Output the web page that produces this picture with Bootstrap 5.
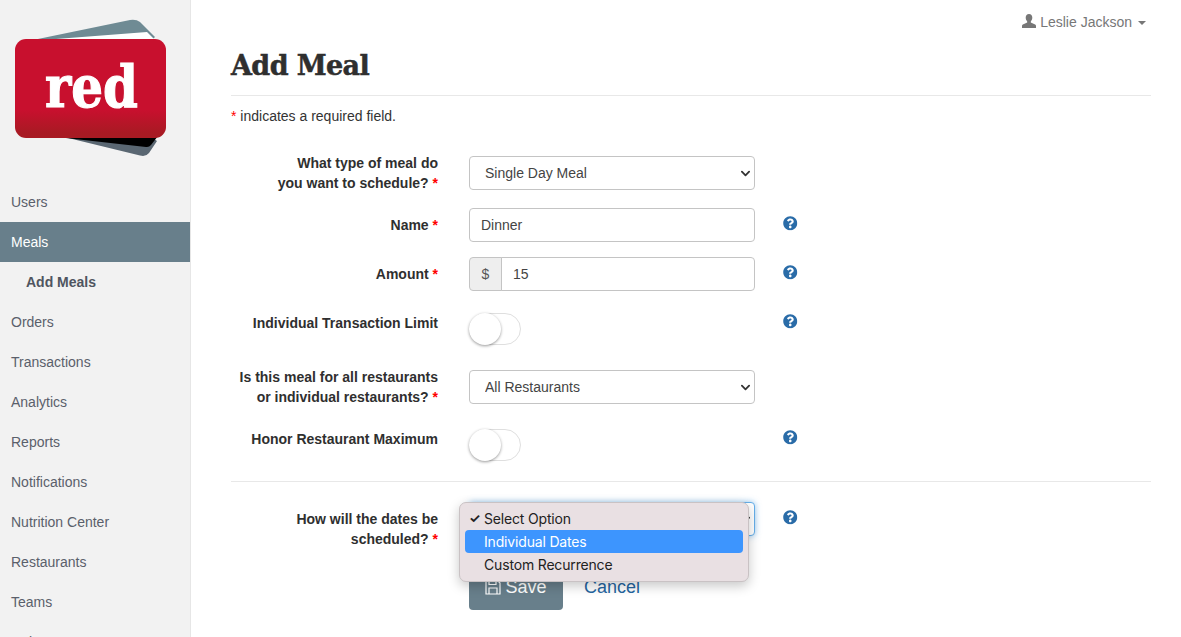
<!DOCTYPE html>
<html lang="en">
<head>
<meta charset="utf-8">
<title>Add Meal</title>
<link href="https://cdn.jsdelivr.net/npm/bootstrap@5.3.0/dist/css/bootstrap.min.css" rel="stylesheet">
<style>
html,body{height:637px;overflow:hidden}
body{font-family:"Liberation Sans",Arial,sans-serif;font-size:14px;line-height:20px;color:#333;background:#fff}
.side-pane{width:191px;flex:none;height:637px;overflow:hidden;background:#f2f2f2;border-right:1px solid #e6e6e6}
.logo-box{height:182px;padding:18px 0 0 14px}
.logo-box svg{display:block}
.side-pane .nav-link{height:40px;padding:10px 11px;color:#5a606b;font-size:14px;line-height:20px}
.side-pane .nav-link.on{background:#687f8b;color:#fff}
.side-pane .nav-link.sub{padding-left:26px;font-weight:700;color:#4f5560}
.main-pane{flex:1;min-width:0;padding:0 30px 0 40px}
.user-bar{padding:12px 5px 0 0;height:32px;color:#777}
.user-bar a{color:#777;text-decoration:none}
.user-bar svg{margin-right:4px;vertical-align:-1px}
.user-bar .dropdown-toggle::after{margin-left:6px;vertical-align:2px;border-top-width:4px;border-left-width:4px;border-right-width:4px}
.page-title{font-family:"DejaVu Serif",serif;font-weight:700;font-size:27px;line-height:40px;letter-spacing:-.6px;color:#2f2f2f;-webkit-text-stroke:.5px #2f2f2f;margin:14px 0 9px}
.rule{margin:0;border-top:1px solid #e8e8e8;opacity:1}
.req-note{margin:10px 0 27px;color:#333}
.req{color:#f00}
.form-line{display:grid;grid-template-columns:208px 286px auto;column-gap:30px;margin-bottom:15px;align-items:start}
.form-line label{text-align:right;font-weight:700;padding-top:7px;padding-right:1px;color:#2f2f2f;margin:0;line-height:20px}
.form-line label.snug{padding-top:0}
.ctrl-cell{position:relative}
.ctrl-cell.nudge{padding-top:3px}
.form-control,.form-select,.input-group-text{font-size:14px;line-height:20px;height:34px;color:#444;border-color:#c4c4c4;border-radius:4px}
.form-control{padding:6px 11px}
.form-select{padding:6px 30px 6px 15px;background-image:url("data:image/svg+xml,%3csvg xmlns='http://www.w3.org/2000/svg' viewBox='0 0 10 7'%3e%3cpath fill='none' stroke='%23333' stroke-width='2' stroke-linecap='round' stroke-linejoin='round' d='M1 1.500l4 4 4-4'/%3e%3c/svg%3e");background-position:right 4px center;background-size:9px 7px}
.input-group-text{background:#eee;padding:6px 12px;color:#555;width:33px;justify-content:center}
.form-select.picked{border-color:#66afe9;box-shadow:0 0 6px rgba(102,175,233,.7);color:transparent}
.help-mark{display:block;width:14.5px;height:14.5px;margin:8px 0 0 -2px;fill:#2a6ca8}
.switch-track{display:flex;width:52px;height:32px;margin:7px 0;border:1px solid #dfdfdf;border-radius:16px;background:#fff}
.switch-knob{width:32px;height:32px;margin:-1px 0 0 -1px;border-radius:50%;background:#fff;box-shadow:0 1px 3px rgba(0,0,0,.4)}
.rule-gap{margin:-2px 0 20px}
.save-btn{display:inline-flex;align-items:center;gap:4px;height:46px;width:94px;justify-content:center;background:#687f8b;border:0;border-radius:4px;color:#fff;font-size:18px;line-height:24px;padding:0}
.cancel-link{font-size:18px;color:#24659f;text-decoration:none;margin-left:21px}
.native-menu{position:absolute;left:-10px;top:0;width:290px;height:80px;padding:4px 5px;background:#e9e0e3;border:1px solid #c9c2c4;border-radius:7px;box-shadow:0 4px 12px rgba(0,0,0,.22);font-family:"Inter","Liberation Sans",sans-serif;font-size:14px;line-height:23px;color:#222;z-index:5}
.native-item{position:relative;height:23px;padding-left:19px;border-radius:4px;letter-spacing:-.17px}
.native-item.hl{background:#3d95fe;color:#fff}
.native-tick{position:absolute;left:4px;top:0;font-size:13px;font-weight:700}
</style>
</head>
<body>
<svg width="0" height="0" class="position-absolute" xmlns="http://www.w3.org/2000/svg"><symbol id="helpGlyph" viewBox="0 0 512 512"><path d="M504 256c0 136.997-111.043 248-248 248S8 392.997 8 256C8 119.083 119.043 8 256 8s248 111.083 248 248zM262.655 90c-54.497 0-89.255 22.957-116.549 63.758-3.536 5.286-2.353 12.415 2.715 16.258l34.699 26.31c5.205 3.947 12.621 3.008 16.665-2.122 17.864-22.658 30.113-35.797 57.303-35.797 20.429 0 45.698 13.148 45.698 32.958 0 14.976-12.363 22.667-32.534 33.976C247.128 238.528 216 254.941 216 296v4c0 6.627 5.373 12 12 12h56c6.627 0 12-5.373 12-12v-1.333c0-28.462 83.186-29.647 83.186-106.667 0-58.002-60.165-102-116.531-102zM256 338c-25.365 0-46 20.635-46 46 0 25.364 20.635 46 46 46s46-20.636 46-46c0-25.365-20.635-46-46-46z"/></symbol></svg>
<div class="d-flex">
  <aside class="side-pane">
    <div class="logo-box">
      <svg width="156" height="144" viewBox="14 18 156 144" xmlns="http://www.w3.org/2000/svg">
        <defs>
          <linearGradient id="redFace" x1="0" y1="0" x2="0" y2="1">
            <stop offset="0" stop-color="#c8102e"/>
            <stop offset=".72" stop-color="#c8102e"/>
            <stop offset=".95" stop-color="#a81a23"/>
            <stop offset="1" stop-color="#a81a23"/>
          </linearGradient>
        </defs>
        <path d="M33 40 L130 20 Q136 19 140 22 L155 37 L150 42Z" fill="#6f8b94"/>
        <path d="M43 40 L147 32 L157 42Z" fill="#fff"/>
        <path d="M60 136 L140 155.500 Q146 157 149 153 L157 141 L150 136Z" fill="#5a6772"/>
        <path d="M48 136 L146 147 Q149 147.500 151 145 L158 136Z" fill="#000"/>
        <rect x="15" y="39" width="151" height="99" rx="11" fill="url(#redFace)"/>
        <text x="45" y="107" fill="#fff" stroke="#fff" stroke-width="1.200" font-family="DejaVu Serif" font-weight="700" font-size="58" textLength="93" lengthAdjust="spacingAndGlyphs">red</text>
      </svg>
    </div>
    <nav class="nav flex-column">
      <a class="nav-link" href="#">Users</a>
      <a class="nav-link on" href="#">Meals</a>
      <a class="nav-link sub" href="#">Add Meals</a>
      <a class="nav-link" href="#">Orders</a>
      <a class="nav-link" href="#">Transactions</a>
      <a class="nav-link" href="#">Analytics</a>
      <a class="nav-link" href="#">Reports</a>
      <a class="nav-link" href="#">Notifications</a>
      <a class="nav-link" href="#">Nutrition Center</a>
      <a class="nav-link" href="#">Restaurants</a>
      <a class="nav-link" href="#">Teams</a>
      <a class="nav-link" href="#">Roles</a>
    </nav>
  </aside>
  <main class="main-pane">
    <div class="user-bar d-flex justify-content-end">
      <a class="dropdown-toggle" href="#"><svg width="14" height="14" viewBox="0 0 14 14" xmlns="http://www.w3.org/2000/svg"><path d="M7 0C4.900 0 3.700 1.500 3.700 3.600c0 1.600.6 3 1.500 3.800v1.200L.9 10.600C.3 10.900 0 11.400 0 12v2h14v-2c0-.6-.3-1.100-.9-1.400L8.800 8.600V7.400c.9-.8 1.500-2.200 1.500-3.800C10.300 1.500 9.100 0 7 0z" fill="#777"/></svg>Leslie Jackson</a>
    </div>
    <h1 class="page-title">Add Meal</h1>
    <hr class="rule">
    <p class="req-note"><span class="req">*</span> indicates a required field.</p>
    <form>
      <div class="form-line">
        <label class="snug">What type of meal do<br>you want to schedule? <span class="req">*</span></label>
        <div class="ctrl-cell nudge"><select class="form-select"><option>Single Day Meal</option></select></div>
      </div>
      <div class="form-line">
        <label>Name <span class="req">*</span></label>
        <div class="ctrl-cell"><input class="form-control" value="Dinner"></div>
        <svg class="help-mark"><use href="#helpGlyph"/></svg>
      </div>
      <div class="form-line">
        <label>Amount <span class="req">*</span></label>
        <div class="ctrl-cell"><div class="input-group"><span class="input-group-text">$</span><input class="form-control" value="15"></div></div>
        <svg class="help-mark"><use href="#helpGlyph"/></svg>
      </div>
      <div class="form-line">
        <label>Individual Transaction Limit</label>
        <div class="ctrl-cell"><div class="switch-track"><span class="switch-knob"></span></div></div>
        <svg class="help-mark"><use href="#helpGlyph"/></svg>
      </div>
      <div class="form-line">
        <label class="snug">Is this meal for all restaurants<br>or individual restaurants? <span class="req">*</span></label>
        <div class="ctrl-cell nudge"><select class="form-select"><option>All Restaurants</option></select></div>
      </div>
      <div class="form-line">
        <label>Honor Restaurant Maximum</label>
        <div class="ctrl-cell"><div class="switch-track"><span class="switch-knob"></span></div></div>
        <svg class="help-mark"><use href="#helpGlyph"/></svg>
      </div>
      <hr class="rule rule-gap">
      <div class="form-line">
        <label>How will the dates be<br>scheduled? <span class="req">*</span></label>
        <div class="ctrl-cell">
          <select class="form-select picked"><option>Select Option</option></select>
          <div class="native-menu">
            <div class="native-item"><span class="native-tick">✓</span>Select Option</div>
            <div class="native-item hl">Individual Dates</div>
            <div class="native-item">Custom Recurrence</div>
          </div>
        </div>
        <svg class="help-mark"><use href="#helpGlyph"/></svg>
      </div>
      <div class="form-line">
        <span></span>
        <div class="ctrl-cell d-flex align-items-center">
          <button type="button" class="btn save-btn"><svg width="16" height="16" viewBox="0 0 16 16" xmlns="http://www.w3.org/2000/svg"><path d="M1 1h11l3 3v11H1z M4 1.500v4h7v-4 M4 15V9h8v6" fill="none" stroke="#fff" stroke-width="1.200"/></svg>Save</button>
          <a class="cancel-link" href="#">Cancel</a>
        </div>
      </div>
    </form>
  </main>
</div>
<script src="https://cdn.jsdelivr.net/npm/bootstrap@5.3.0/dist/js/bootstrap.bundle.min.js"></script>
</body>
</html>
